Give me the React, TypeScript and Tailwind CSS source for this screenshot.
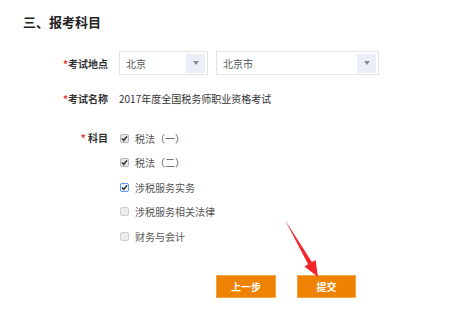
import React from "react";

const font = { fontFamily: '"Noto Sans CJK SC", "Noto Sans", sans-serif' };

function Select({ value, width }: { value: string; width: string }) {
  return (
    <div
      className={`${width} h-[24px] border border-[#e3e3e3] flex items-center justify-between pl-[6px] pr-[2px] bg-white`}
    >
      <span className="text-[10px] text-[#555]">{value}</span>
      <span className="w-[19px] h-[19px] bg-[#e9eef7] flex items-center justify-center">
        <svg width="6" height="4" viewBox="0 0 6 4">
          <path d="M0 0 L6 0 L3 4 Z" fill="#8a8a8a" />
        </svg>
      </span>
    </div>
  );
}

function Check({ checked, focus }: { checked: boolean; focus?: boolean }) {
  return (
    <span
      className={`w-[9px] h-[9px] rounded-[2px] border flex items-center justify-center ${
        focus ? "border-[#5b9bea] bg-[#eef3fb]" : checked ? "border-[#b5b5b5] bg-[#e6e6e6]" : "border-[#cfcfcf] bg-[#ececec]"
      }`}
    >
      {checked && (
        <svg width="7" height="7" viewBox="0 0 7 7">
          <path d="M1 3.6 L2.8 5.4 L6 1.4" stroke="#222" strokeWidth="1.4" fill="none" />
        </svg>
      )}
    </span>
  );
}

const subjects = [
  { name: "税法（一）", checked: true },
  { name: "税法（二）", checked: true },
  { name: "涉税服务实务", checked: true, focus: true },
  { name: "涉税服务相关法律", checked: false },
  { name: "财务与会计", checked: false },
];

export default function App() {
  return (
    <div className="w-[460px] h-[315px] bg-white relative overflow-hidden" style={font}>
      <div className="pt-[13px] pl-[23px] text-[13px] font-bold text-[#222] leading-[18px]">
        三、报考科目
      </div>

      <div className="mt-[20px] flex items-center">
        <div className="w-[108px] text-right text-[10px] font-bold text-[#333]">
          <span className="text-[#e4393c]">*</span>考试地点
        </div>
        <div className="ml-[11px] flex gap-[8px]">
          <Select value="北京" width="w-[89px]" />
          <Select value="北京市" width="w-[163px]" />
        </div>
      </div>

      <div className="mt-[17px] flex items-center leading-[14px]">
        <div className="w-[108px] text-right text-[10px] font-bold text-[#333]">
          <span className="text-[#e4393c]">*</span>考试名称
        </div>
        <div className="ml-[11px] text-[10px] text-[#333]">2017年度全国税务师职业资格考试</div>
      </div>

      <div className="mt-[25px] flex">
        <div className="w-[108px] text-right text-[10px] font-bold text-[#333] leading-[14px]">
          <span className="text-[#e4393c]">* </span>科目
        </div>
        <div className="ml-[12px] flex flex-col gap-[10.5px]">
          {subjects.map((s) => (
            <div key={s.name} className="flex items-center gap-[6px] h-[14px]">
              <Check checked={s.checked} focus={s.focus} />
              <span className="text-[10px] text-[#555]">{s.name}</span>
            </div>
          ))}
        </div>
      </div>

      <div className="mt-[32px] ml-[216px] flex gap-[21px]">
        <button className="w-[60px] h-[23px] bg-[#ef8200] border border-[#f3a54a] text-white text-[10px] font-bold">
          上一步
        </button>
        <button className="w-[59px] h-[23px] bg-[#ef8200] border border-[#f3a54a] text-white text-[10px] font-bold">
          提交
        </button>
      </div>

      <svg className="absolute left-0 top-0 pointer-events-none" width="460" height="315" viewBox="0 0 460 315">
        <path d="M285 220 L311.9 262.1 L315.6 260 L318 277 L304.4 266.4 L308.1 264.3 Z" fill="#f0262c" />
      </svg>
    </div>
  );
}
